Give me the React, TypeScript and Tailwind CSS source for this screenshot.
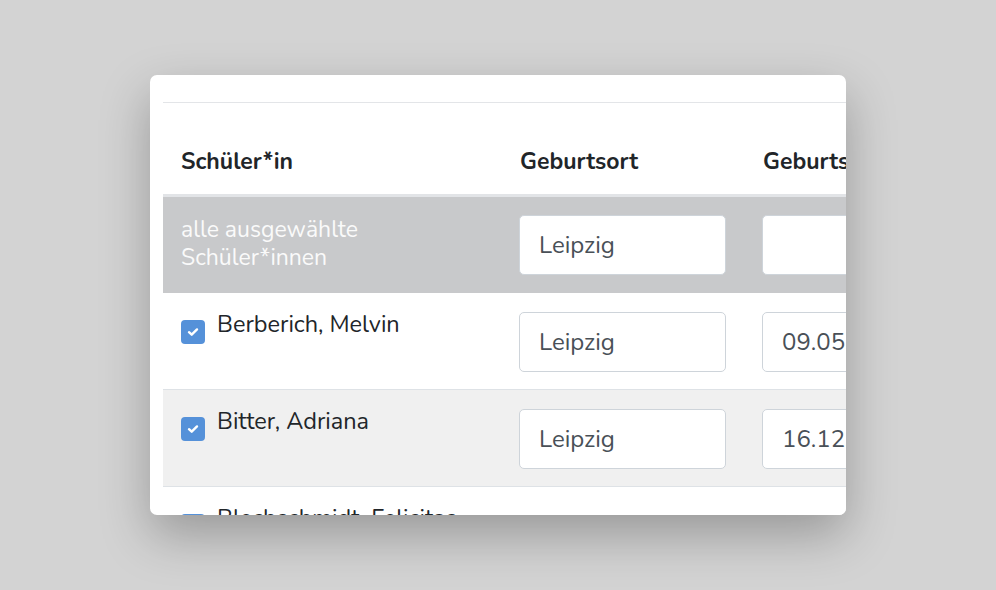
import * as React from "react"

type Student = { name: string; place?: string; date?: string }

// the last row is cut off by the dialog; its fields sit below the visible area
const STUDENTS: Student[] = [
  { name: "Berberich, Melvin", place: "Leipzig", date: "09.05.2008" },
  { name: "Bitter, Adriana", place: "Leipzig", date: "16.12.2008" },
  { name: "Blechschmidt, Felicitas" },
]

const FONT = "font-['Nunito','Lato','Open_Sans',sans-serif]"

function Field({ value }: { value: string }) {
  return (
    <div className="flex h-[60px] w-[207px] items-center rounded-[5px] border border-[#ced4da] bg-white px-[19px] text-[24px] text-[#495057]">
      {value}
    </div>
  )
}

function Check() {
  return (
    <span className="mt-[8px] grid size-[24px] shrink-0 place-items-center rounded-[4px] bg-[#5591d9]">
      <svg width="12" height="10" viewBox="0 0 12 10" fill="none">
        <path d="M2 5.2 4.7 7.7 10 2.4" stroke="white" strokeWidth="2.4" strokeLinecap="round" strokeLinejoin="round" />
      </svg>
    </span>
  )
}

export default function App() {
  return (
    <div className={`flex h-[590px] w-full items-center justify-center bg-[#d3d3d3] ${FONT}`}>
      <div className="h-[440px] w-[696px] overflow-hidden rounded-[7px] bg-white pl-[13px] pt-[27px] shadow-[0_20px_50px_rgba(0,0,0,0.28)]">
        <div className="w-[900px] border-t border-[#e3e5e8]">
          {/* header */}
          <div className="flex border-b-[3px] border-[#e2e4e7] pb-[17px] pt-[44px] text-[23px] leading-[30px] font-bold text-[#212529]">
            <div className="w-[338px] pl-[18px]">Schüler*in</div>
            <div className="w-[243px] pl-[19px]">Geburtsort</div>
            <div className="w-[243px] pl-[19px]">Geburtsdatum</div>
          </div>

          {/* bulk row */}
          <div className="flex bg-[#c8c9cb] py-[18px]">
            <div className="w-[338px] pl-[18px] pt-[1px] text-[23px] leading-[28px] text-[#fafafa]">
              alle ausgewählte
              <br />
              Schüler*innen
            </div>
            <div className="w-[243px] pl-[18px]">
              <Field value="Leipzig" />
            </div>
            <div className="w-[243px] pl-[18px]">
              <Field value="" />
            </div>
          </div>

          {STUDENTS.map((s, i) => (
            <div
              key={s.name}
              className={`flex border-b border-[#dee2e6] pb-[17px] pt-[19px] ${i % 2 === 1 ? "bg-[#f0f0f0]" : "bg-white"}`}
            >
              <div className="flex w-[338px] items-start gap-[12px] pl-[18px]">
                <Check />
                <span className="mt-[-3px] text-[23.5px] leading-[30px] text-[#212529]">{s.name}</span>
              </div>
              {s.place && (
                <div className="w-[243px] pl-[18px]">
                  <Field value={s.place} />
                </div>
              )}
              {s.date && (
                <div className="w-[243px] pl-[18px]">
                  <Field value={s.date} />
                </div>
              )}
            </div>
          ))}
        </div>
      </div>
    </div>
  )
}
